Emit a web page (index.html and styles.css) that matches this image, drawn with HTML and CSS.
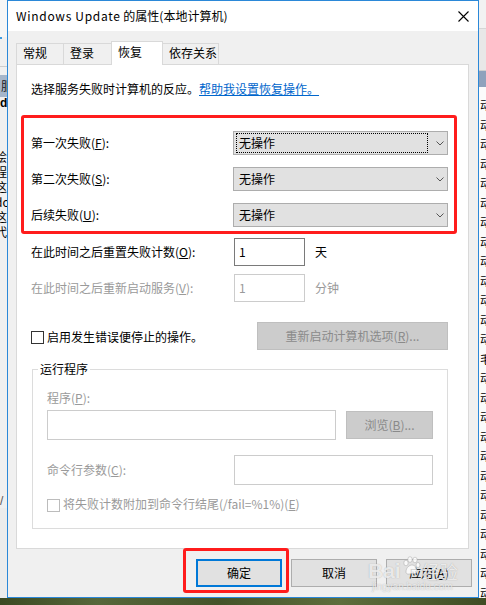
FILE: index.html
```html
<!DOCTYPE html>
<html lang="zh-CN">
<head>
<meta charset="utf-8">
<title>Windows Update 的属性(本地计算机)</title>
<link rel="stylesheet" href="styles.css">
</head>
<body>
<div class="screen">
  <div class="bg-left">
    <div class="bl-top"></div>
    <div class="bl-mark"><span></span></div>
    <div class="bl-gap"></div>
    <div class="bl-line"></div>
    <div class="bl-gap2"></div>
    <div class="bl-band">服</div>
    <div class="bl-bold">d</div>
    <div class="bl-gap3"></div>
    <div class="bl-text">绘<br>程<br>这<br>do<br>这<br>代</div>
    <div class="bl-rest"></div>
    <div class="bl-slash">/</div>
    <div class="bl-end"></div>
  </div>

  <div class="dialog">
    <div class="titlebar">
      <span class="title"><span class="latin">Windows Update</span> 的属性(本地计算机)</span>
      <svg class="close" width="11" height="11" viewBox="0 0 11 11"><path d="M0.5 0.5 L10.5 10.5 M10.5 0.5 L0.5 10.5" stroke="#000" stroke-width="1.1" fill="none"/></svg>
    </div>
    <div class="body">
      <div class="tabs">
        <div class="tab t1">常规</div>
        <div class="tab t2">登录</div>
        <div class="tab t3 active">恢复</div>
        <div class="tab t4">依存关系</div>
      </div>
      <div class="panel">
        <div class="annot annot-rows"></div>
        <p class="intro">选择服务失败时计算机的反应。<span class="link">帮助我设置恢复操作。</span></p>
        <div class="fail-rows">
          <div class="row">
            <span class="label">第一次失败(<u>F</u>):</span>
            <div class="combo"><span class="combo-val focus">无操作</span><svg class="chev" width="8" height="5" viewBox="0 0 8 5"><path d="M0.5 0.5 L4 4 L7.5 0.5" stroke="#555" fill="none"/></svg></div>
          </div>
          <div class="row">
            <span class="label">第二次失败(<u>S</u>):</span>
            <div class="combo"><span class="combo-val">无操作</span><svg class="chev" width="8" height="5" viewBox="0 0 8 5"><path d="M0.5 0.5 L4 4 L7.5 0.5" stroke="#555" fill="none"/></svg></div>
          </div>
          <div class="row">
            <span class="label">后续失败(<u>U</u>):</span>
            <div class="combo"><span class="combo-val">无操作</span><svg class="chev" width="8" height="5" viewBox="0 0 8 5"><path d="M0.5 0.5 L4 4 L7.5 0.5" stroke="#555" fill="none"/></svg></div>
          </div>
        </div>
        <div class="row reset">
          <span class="label wide">在此时间之后重置失败计数(<u>O</u>):</span>
          <div class="input num">1</div>
          <span class="unit">天</span>
        </div>
        <div class="row restart dis">
          <span class="label wide">在此时间之后重新启动服务(<u>V</u>):</span>
          <div class="input num off">1</div>
          <span class="unit">分钟</span>
        </div>
        <div class="row stop">
          <span class="check"></span>
          <span class="check-label">启用发生错误便停止的操作。</span>
          <div class="btn off-btn restart-btn">重新启动计算机选项(<u>R</u>)...</div>
        </div>
        <fieldset class="group">
          <legend>运行程序</legend>
          <div class="g-label dis">程序(<u>P</u>):</div>
          <div class="g-row prog-row">
            <div class="input off prog"></div>
            <div class="btn off-btn browse">浏览(<u>B</u>)...</div>
          </div>
          <div class="g-row cmd-row dis">
            <span class="cmd-label">命令行参数(<u>C</u>):</span>
            <div class="input off cmd"></div>
          </div>
          <div class="g-row chk-row dis">
            <span class="check off"></span>
            <span>将失败计数附加到命令行结尾(/fail=%1%)(<u>E</u>)</span>
          </div>
        </fieldset>
      </div>
      <div class="buttons">
        <div class="btn ok">确定<div class="annot annot-ok"></div></div>
        <div class="btn">取消</div>
        <div class="btn">应用(<u>A</u>)</div>
      </div>
    </div>
  </div>

  <div class="bg-right">
    <div class="br-top"></div>
    <div class="br-hdr"></div>
    <div class="br-band"></div>
    <div class="br-list">动<br>动<br>动<br>动<br>动<br>动<br>动<br>动<br>动<br>动<br>动<br>动<br>动<br>毛<br>动<br>动<br>动<br>动<br>动<br>动<br>动<br>动<br>动<br>动<br>动<br>动</div>
  </div>

  <div class="bg-bottom"></div>

  <div class="watermark">
    <div class="wm-logo"><span class="wm-bai">Bai</span><svg class="wm-paw" width="20" height="20" viewBox="0 0 20 20"><g fill="rgba(255,255,255,0.8)" stroke="rgba(150,150,150,0.5)" stroke-width="0.8"><ellipse cx="5" cy="7" rx="2.2" ry="2.8"/><ellipse cx="9" cy="3.5" rx="2.2" ry="2.8"/><ellipse cx="14" cy="4" rx="2.2" ry="2.8"/><ellipse cx="17" cy="9" rx="2" ry="2.5"/><path d="M5 16 C5 11 9 9 11 9 C14 9 16 12 16 15 C16 18 13 18 11 17.5 C9 18 5 19 5 16 Z"/></g></svg><span class="wm-jy">经验</span></div>
    <div class="wm-url">jingyan.baidu.com</div>
  </div>
</div>
</body>
</html>
```

FILE: styles.css
```css
* { box-sizing: border-box; }

html, body {
  margin: 0;
  padding: 0;
}

body {
  width: 486px;
  height: 605px;
  overflow: hidden;
  font-family: "Noto Sans CJK SC", sans-serif;
  font-size: 12px;
  line-height: 16px;
  color: #000;
  background: #f0f0f0;
}

u { text-decoration: underline; text-underline-offset: 1px; }

.screen {
  position: relative;
  display: grid;
  grid-template-columns: 7px 472px 7px;
  grid-template-rows: 598px 7px;
  width: 486px;
  height: 605px;
}

/* ---------- background left ---------- */
.bg-left {
  grid-column: 1;
  grid-row: 1;
  overflow: hidden;
  display: flex;
  flex-direction: column;
  background: #f0f0f0;
}
.bl-top { height: 37px; background: #f6f6f6; }
.bl-mark { height: 3px; }
.bl-mark span { display: block; width: 2px; height: 2px; background: #3d9ae0; }
.bl-gap { height: 26px; }
.bl-line { height: 1px; background: #cdcdcd; }
.bl-gap2 { height: 8px; }
.bl-band { height: 22px; background: #a6b6ca; line-height: 22px; padding-left: 1px; color: #1a1a1a; overflow: hidden; }
.bl-bold { height: 12px; line-height: 12px; font-weight: bold; font-family: "Liberation Sans", sans-serif; overflow: hidden; }
.bl-gap3 { height: 40px; }
.bl-text { line-height: 15px; margin-left: -5px; white-space: nowrap; overflow: hidden; }
.bl-rest { height: 255px; }
.bl-slash { height: 14px; line-height: 14px; color: #555; font-family: "Liberation Sans", sans-serif; }
.bl-end { flex: 1; background: #ececec; }

/* ---------- dialog ---------- */
.dialog {
  grid-column: 2;
  grid-row: 1;
  border: 1px solid #2b88d8;
  background: #f0f0f0;
  display: flex;
  flex-direction: column;
}

.titlebar {
  height: 30px;
  background: #fff;
  display: flex;
  align-items: center;
  justify-content: space-between;
  padding: 0 9px 0 8px;
}
.title { font-size: 12px; white-space: nowrap; }
.title .latin { letter-spacing: 0.7px; }
.close { display: block; }

.body {
  flex: 1;
  padding: 10px 0 0 8px;
  display: flex;
  flex-direction: column;
}

.tabs {
  display: flex;
  align-items: flex-end;
  height: 23px;
}
.tab {
  height: 21px;
  border: 1px solid #d9d9d9;
  border-bottom: none;
  background: #f0f0f0;
  padding-left: 6px;
  line-height: 18px;
}
.tab + .tab { margin-left: -1px; }
.t1 { width: 48px; }
.t2 { width: 49px; }
.t3 { width: 52px; }
.t4 { width: 57px; }
.tab.active {
  height: 24px;
  margin-bottom: -1px;
  background: #fff;
  position: relative;
  z-index: 1;
  line-height: 20px;
}

.panel {
  position: relative;
  width: 453px;
  height: 485px;
  border: 1px solid #d9d9d9;
  background: #fff;
  padding: 16px 20px 0 14px;
  display: flex;
  flex-direction: column;
}

.intro {
  margin: 0;
  height: 16px;
  white-space: nowrap;
}
.link {
  color: #0066cc;
  text-decoration: underline;
  text-underline-offset: 1px;
}

.fail-rows {
  margin-top: 34px;
  display: flex;
  flex-direction: column;
  gap: 12px;
}

.row {
  display: flex;
  align-items: center;
}
.label { width: 202px; flex: none; white-space: nowrap; }
.label.wide { width: 203px; }

.combo {
  width: 215px;
  height: 24px;
  border: 1px solid #adadad;
  background: #e1e1e1;
  display: flex;
  align-items: center;
  padding-left: 2px;
}
.combo-val {
  width: 192px;
  height: 20px;
  line-height: 18px;
  padding-left: 2px;
  border: 1px dotted transparent;
}
.combo-val.focus { border-color: #000; }
.chev { margin-left: 8px; display: block; }

.reset { margin-top: 11px; height: 28px; }
.restart { margin-top: 8px; height: 28px; }

.input {
  height: 28px;
  border: 1px solid #7a7a7a;
  background: #fff;
}
.input.num {
  width: 71px;
  padding-left: 4px;
  line-height: 26px;
}
.input.off { border-color: #cccccc; }
.unit { margin-left: 10px; }

.dis { color: #9a9a9a; }

.stop { margin-top: 20px; height: 28px; }
.check {
  width: 13px;
  height: 13px;
  border: 1px solid #333;
  background: #fff;
  margin-right: 3px;
  margin-top: 3px;
  flex: none;
}
.check.off { border-color: #bcbcbc; margin-top: 2px; }
.check-label { margin-top: 2px; }

.btn {
  width: 86px;
  height: 28px;
  border: 1px solid #adadad;
  background: #e1e1e1;
  display: flex;
  align-items: center;
  justify-content: center;
  white-space: nowrap;
  flex: none;
}
.off-btn {
  background: #cccccc;
  border-color: #bfbfbf;
  color: #8a8a8a;
}
.restart-btn { width: 191px; margin-left: auto; }

.group {
  margin: 11px 0 0 1px;
  width: 416px;
  border: 1px solid #dcdcdc;
  padding: 0 14px 16px 14px;
  min-width: 0;
}
.group legend {
  padding: 0 2px;
  margin-left: -9px;
  line-height: 16px;
}
.g-label { margin-top: 13px; height: 16px; }
.g-row { display: flex; align-items: center; }
.prog-row { margin-top: 4px; }
.input.prog { width: 290px; height: 30px; }
.browse { width: 87px; margin-left: 10px; }
.cmd-row { margin-top: 15px; }
.cmd-label { width: 187px; flex: none; }
.input.cmd { width: 199px; height: 30px; }
.chk-row { margin-top: 11px; height: 16px; white-space: nowrap; }

.buttons {
  margin-top: 10px;
  display: flex;
  justify-content: flex-end;
  gap: 9px;
  padding-right: 6px;
}
.btn.ok {
  position: relative;
  border: 2px solid #0078d7;
}

.annot {
  position: absolute;
  border: 3px solid #ff1c1c;
  border-radius: 3px;
  pointer-events: none;
}
.annot-rows { left: 4px; top: 50px; width: 436px; height: 119px; }
.annot-ok { left: -15px; top: -13px; right: -9px; bottom: -8px; }

/* ---------- background right ---------- */
.bg-right {
  grid-column: 3;
  grid-row: 1;
  overflow: hidden;
  background: #fbfbfb;
  display: flex;
  flex-direction: column;
}
.br-top { height: 28px; background: #f2f2f2; }
.br-hdr { height: 44px; background: #e8e8e8; border-top: 1px solid #d6d6d6; border-bottom: 1px solid #cfcfcf; }
.br-band { height: 16px; background: #8fa2bc; }
.br-list {
  padding-top: 8px;
  line-height: 19.5px;
  white-space: nowrap;
  padding-left: 1px;
  overflow: hidden;
}

/* ---------- bottom desktop ---------- */
.bg-bottom {
  grid-column: 1 / -1;
  grid-row: 2;
  background: linear-gradient(90deg, #3b4a22 0%, #56673a 20%, #44542a 45%, #5d6e3c 70%, #3f4d24 100%);
}

/* ---------- watermark ---------- */
.watermark {
  position: absolute;
  left: 368px;
  top: 552px;
  color: rgba(255, 255, 255, 0.75);
  text-shadow: 0 0 1px rgba(110, 110, 110, 0.55);
  pointer-events: none;
}
.wm-logo { display: flex; align-items: flex-end; height: 30px; }
.wm-bai { font-family: "Liberation Sans", sans-serif; font-weight: bold; font-size: 21px; line-height: 22px; }
.wm-paw { margin: 0 1px 6px 0; }
.wm-jy { font-size: 18px; line-height: 22px; }
.wm-url { font-family: "Liberation Sans", sans-serif; font-size: 10px; line-height: 10px; margin-left: 4px; }
```
